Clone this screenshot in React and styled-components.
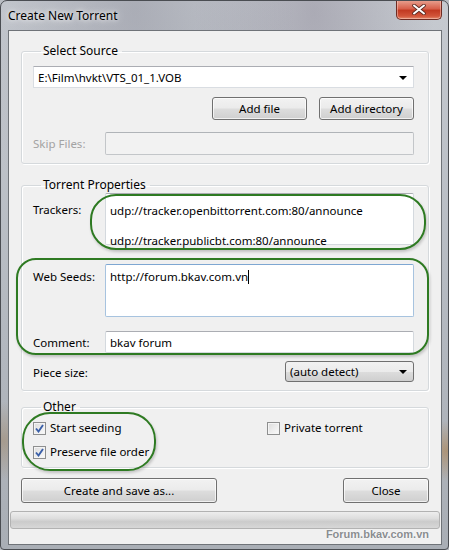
import React from "react";
import styled, { createGlobalStyle } from "styled-components";

const GlobalStyle = createGlobalStyle`
  html, body {
    margin: 0;
    padding: 0;
    background: #b9bdc3;
  }
  * {
    box-sizing: border-box;
  }
`;

const WindowFrame = styled.div`
  position: relative;
  width: 449px;
  height: 550px;
  border: 1px solid #4a4d52;
  border-radius: 7px 7px 4px 4px;
  background:
    radial-gradient(ellipse at 30% 8px, rgba(120, 120, 135, 0.35), transparent 160px),
    radial-gradient(ellipse at 70% 10px, rgba(110, 100, 120, 0.3), transparent 120px),
    radial-gradient(ellipse at 2px 440px, rgba(150, 110, 60, 0.35), transparent 40px),
    radial-gradient(ellipse at 446px 450px, rgba(170, 110, 40, 0.45), transparent 30px),
    linear-gradient(to bottom, #c6cad0, #b3b8bf 60%, #a9aeb5);
  font-family: "Noto Sans", "Open Sans", sans-serif;
  font-size: 11.5px;
  color: #000;
  display: flex;
  flex-direction: column;
  overflow: hidden;
`;

const TitleBar = styled.div`
  height: 29px;
  display: flex;
  align-items: center;
  padding-left: 7px;
  padding-bottom: 1px;
  font-size: 12px;
  color: #000;
  text-shadow: 0 0 8px rgba(255, 255, 255, 0.9), 0 0 4px rgba(255, 255, 255, 0.8);
`;

const CloseButton = styled.div`
  position: absolute;
  top: -1px;
  right: 6px;
  width: 46px;
  height: 20px;
  border: 1px solid #6e2b22;
  border-top: none;
  border-radius: 0 0 5px 5px;
  background: linear-gradient(to bottom, #e9a493 0%, #d7614c 45%, #c23a22 55%, #d2553a 85%, #e48b6d 100%);
  box-shadow: inset 0 0 0 1px rgba(255, 220, 210, 0.45);
  display: flex;
  align-items: center;
  justify-content: center;
`;

const ClientArea = styled.div`
  margin: 0 6px 4px 7px;
  flex: 1;
  background: #f0f0f0;
  border: 1px solid #6f7378;
  padding: 12px 12px 0 12px;
  display: flex;
  flex-direction: column;
`;

const GroupBox = styled.fieldset`
  margin: ${(p) => p.$top}px 0 0 0;
  padding: ${(p) => p.$padTop}px 14px ${(p) => p.$padBottom}px 11px;
  border: 1px solid #d5d9dc;
  border-radius: 3px;
  box-shadow: inset 1px 1px 0 #fff, 1px 1px 0 #fff;
  min-width: 0;
`;

const Legend = styled.legend`
  padding: 0 4px 0 2px;
  margin-left: 8px;
  line-height: 16px;
  font-size: 12px;
`;

const Row = styled.div`
  display: flex;
  align-items: ${(p) => p.$align || "center"};
  justify-content: ${(p) => p.$justify || "flex-start"};
  gap: ${(p) => p.$gap || 0}px;
  margin-top: ${(p) => p.$top || 0}px;
`;

const FieldLabel = styled.div`
  width: 72px;
  flex-shrink: 0;
  color: ${(p) => (p.$disabled ? "#a3a3a3" : "#000")};
  padding-top: ${(p) => p.$padTop || 0}px;
  line-height: 15px;
`;

const TextBox = styled.div`
  flex: 1;
  height: ${(p) => p.$h}px;
  background: ${(p) => (p.$disabled ? "#f2f2f2" : "#fff")};
  border: 1px solid ${(p) => (p.$focused ? "#a7c3df" : p.$disabled ? "#c3c6c9" : "#d4d9de")};
  border-top-color: ${(p) => (p.$focused ? "#7ea7d2" : p.$disabled ? "#b0b4b8" : "#abadb3")};
  border-radius: 2px;
  padding: ${(p) => p.$padTop || 0}px 4px 0 4px;
  line-height: ${(p) => p.$lh || 15}px;
  white-space: pre;
  overflow: ${(p) => (p.$spill ? "visible" : "hidden")};
`;

const Caret = styled.span`
  display: inline-block;
  width: 1px;
  height: 14px;
  background: #000;
  vertical-align: -3px;
`;

const ComboBox = styled.div`
  width: ${(p) => (p.$w ? `${p.$w}px` : "100%")};
  margin-left: ${(p) => (p.$w ? "auto" : "0")};
  height: ${(p) => p.$h}px;
  display: flex;
  align-items: center;
  justify-content: space-between;
  padding: 0 6px 0 4px;
  border: 1px solid ${(p) => (p.$button ? "#707070" : "#d9dde2")};
  border-top-color: ${(p) => (p.$button ? "#707070" : "#abadb3")};
  border-radius: ${(p) => (p.$button ? 3 : 1)}px;
  background: ${(p) =>
    p.$button
      ? "linear-gradient(to bottom, #f2f2f2 0%, #ebebeb 50%, #dddddd 51%, #cfcfcf 100%)"
      : "#fff"};
`;

const Arrow = styled.span`
  width: 0;
  height: 0;
  border-left: 4px solid transparent;
  border-right: 4px solid transparent;
  border-top: 4px solid #000;
  margin-top: 1px;
`;

const PushButton = styled.button`
  width: ${(p) => p.$w}px;
  height: ${(p) => p.$h}px;
  font-family: inherit;
  font-size: 11.5px;
  color: #000;
  padding: 0;
  border: 1px solid #707070;
  border-radius: 3px;
  background: linear-gradient(to bottom, #f2f2f2 0%, #ebebeb 48%, #dddddd 52%, #cfcfcf 100%);
  box-shadow: inset 0 0 0 1px rgba(255, 255, 255, 0.7);
`;

const CheckRow = styled.label`
  display: flex;
  align-items: center;
  gap: 4px;
  height: 16px;
  line-height: 16px;
`;

const CheckBox = styled.span`
  width: 13px;
  height: 13px;
  border: 1px solid #8e8f8f;
  background: linear-gradient(135deg, #dcdcdc, #fbfbfb);
  box-shadow: inset 0 0 0 1px #f4f4f4;
  display: flex;
  align-items: center;
  justify-content: center;
`;

const Columns = styled.div`
  display: grid;
  grid-template-columns: 234px 1fr;
`;

const Stack = styled.div`
  display: flex;
  flex-direction: column;
  gap: ${(p) => p.$gap}px;
`;

const ProgressBar = styled.div`
  margin: 8px -11px 0 -11px;
  height: 18px;
  border: 1px solid #b2b2b2;
  border-radius: 3px;
  background: linear-gradient(to bottom, #eeeeee 0%, #dedede 40%, #cbcbcb 60%, #d7d7d7 100%);
`;

const Watermark = styled.div`
  position: absolute;
  right: 19px;
  bottom: 9px;
  font-family: "Liberation Sans", Arial, sans-serif;
  font-weight: bold;
  font-size: 11px;
  color: #8a8d90;
  text-shadow: 0 0 2px #fff, 0 0 1px #fff;
`;

const Annotation = styled.div`
  position: absolute;
  left: ${(p) => p.$x}px;
  top: ${(p) => p.$y}px;
  width: ${(p) => p.$w}px;
  height: ${(p) => p.$h}px;
  border: 2px solid #2e7a22;
  border-radius: ${(p) => p.$r}px;
  box-shadow: 1px 2px 3px rgba(0, 0, 0, 0.2);
  pointer-events: none;
`;

const Tick = () => (
  <svg width="9" height="9" viewBox="0 0 9 9">
    <path d="M1 4.5 L3.5 7.5 L8 1" fill="none" stroke="#3a5fa8" strokeWidth="1.9" />
  </svg>
);

const App = () => {
  return (
    <>
      <GlobalStyle />
      <WindowFrame>
        <TitleBar>Create New Torrent</TitleBar>
        <CloseButton>
          <svg width="14" height="11" viewBox="0 0 14 11">
            <path d="M2 1.5 L12 9.5 M12 1.5 L2 9.5" stroke="#5a2a22" strokeWidth="3.6" strokeLinecap="round" />
            <path d="M2 1.5 L12 9.5 M12 1.5 L2 9.5" stroke="#fff" strokeWidth="2" strokeLinecap="round" />
          </svg>
        </CloseButton>

        <ClientArea>
          <GroupBox $top={0} $padTop={7} $padBottom={8}>
            <Legend>Select Source</Legend>
            <ComboBox $h={22}>
              <span>E:\Film\hvkt\VTS_01_1.VOB</span>
              <Arrow />
            </ComboBox>
            <Row $justify="flex-end" $gap={12} $top={9}>
              <PushButton $w={95} $h={23}>Add file</PushButton>
              <PushButton $w={95} $h={23}>Add directory</PushButton>
            </Row>
            <Row $top={12}>
              <FieldLabel $disabled>Skip Files:</FieldLabel>
              <TextBox $h={23} $disabled />
            </Row>
          </GroupBox>

          <GroupBox $top={13} $padTop={0} $padBottom={8}>
            <Legend>Torrent Properties</Legend>
            <Row $align="flex-start">
              <FieldLabel $padTop={9}>Trackers:</FieldLabel>
              <TextBox $h={52} $padTop={9} $lh={15} $spill>
                {"udp://tracker.openbittorrent.com:80/announce\n\nudp://tracker.publicbt.com:80/announce"}
              </TextBox>
            </Row>
            <Row $align="flex-start" $top={19}>
              <FieldLabel $padTop={5}>Web Seeds:</FieldLabel>
              <TextBox $h={53} $padTop={4} $focused>
                http://forum.bkav.com.vn
                <Caret />
              </TextBox>
            </Row>
            <Row $top={14}>
              <FieldLabel>Comment:</FieldLabel>
              <TextBox $h={22} $padTop={3}>bkav forum</TextBox>
            </Row>
            <Row $top={8}>
              <FieldLabel $padTop={2}>Piece size:</FieldLabel>
              <ComboBox $h={21} $w={129} $button>
                <span>(auto detect)</span>
                <Arrow />
              </ComboBox>
            </Row>
          </GroupBox>

          <GroupBox $top={8} $padTop={5} $padBottom={7}>
            <Legend>Other</Legend>
            <Columns>
              <Stack $gap={8}>
                <CheckRow>
                  <CheckBox><Tick /></CheckBox>
                  Start seeding
                </CheckRow>
                <CheckRow>
                  <CheckBox><Tick /></CheckBox>
                  Preserve file order
                </CheckRow>
              </Stack>
              <Stack $gap={8}>
                <CheckRow>
                  <CheckBox />
                  Private torrent
                </CheckRow>
              </Stack>
            </Columns>
          </GroupBox>

          <Row $justify="space-between" $top={10}>
            <PushButton $w={196} $h={25}>Create and save as...</PushButton>
            <PushButton $w={86} $h={25}>Close</PushButton>
          </Row>
          <ProgressBar />
        </ClientArea>

        <Watermark>Forum.bkav.com.vn</Watermark>
        <Annotation $x={89} $y={193} $w={336} $h={56} $r={26} />
        <Annotation $x={15} $y={257} $w={413} $h={97} $r={20} />
        <Annotation $x={21} $y={411} $w={134} $h={59} $r={28} />
      </WindowFrame>
    </>
  );
};

export default App;
